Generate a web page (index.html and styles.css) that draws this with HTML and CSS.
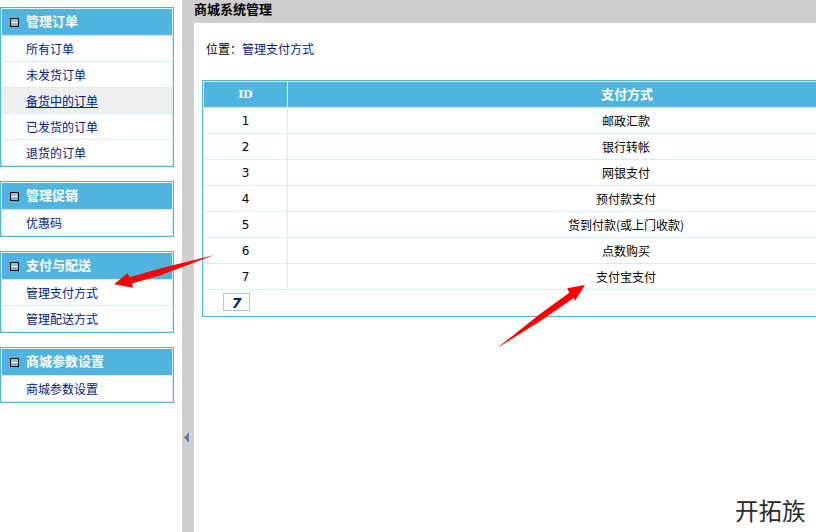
FILE: index.html
```html
<!DOCTYPE html>
<html lang="zh-CN">
<head>
<meta charset="utf-8">
<title>管理支付方式</title>
<link rel="stylesheet" href="styles.css">
</head>
<body>
<div class="layout">
  <aside class="sidebar">
    <section class="panel">
      <h2 class="panel-head"><span class="toggle"></span>管理订单</h2>
      <a class="item">所有订单</a>
      <a class="item">未发货订单</a>
      <a class="item active">备货中的订单</a>
      <a class="item">已发货的订单</a>
      <a class="item">退货的订单</a>
    </section>
    <section class="panel">
      <h2 class="panel-head"><span class="toggle"></span>管理促销</h2>
      <a class="item">优惠码</a>
    </section>
    <section class="panel">
      <h2 class="panel-head"><span class="toggle"></span>支付与配送</h2>
      <a class="item">管理支付方式</a>
      <a class="item">管理配送方式</a>
    </section>
    <section class="panel">
      <h2 class="panel-head"><span class="toggle"></span>商城参数设置</h2>
      <a class="item">商城参数设置</a>
    </section>
  </aside>
  <div class="splitter">
    <svg class="splitter-arrow" width="6" height="11" viewBox="0 0 6 11"><polygon points="0,5.5 3,2.5 3,8.5" fill="#8a6f5c"/><polygon points="3,2 5,0.5 5,10.5 3,9" fill="#4f7fb8"/></svg>
  </div>
  <main class="main">
    <header class="topbar">商城系统管理</header>
    <div class="content">
      <p class="crumb">位置：<a class="crumb-link">管理支付方式</a></p>
      <div class="grid">
        <table class="grid-table">
          <colgroup><col class="col-id"><col></colgroup>
          <thead>
            <tr><th>ID</th><th>支付方式</th></tr>
          </thead>
          <tbody>
            <tr><td class="num">1</td><td>邮政汇款</td></tr>
            <tr><td class="num">2</td><td>银行转帐</td></tr>
            <tr><td class="num">3</td><td>网银支付</td></tr>
            <tr><td class="num">4</td><td>预付款支付</td></tr>
            <tr><td class="num">5</td><td>货到付款(或上门收款)</td></tr>
            <tr><td class="num">6</td><td>点数购买</td></tr>
            <tr><td class="num">7</td><td>支付宝支付</td></tr>
            <tr><td class="pager-cell" colspan="2"><span class="pager">7</span></td></tr>
          </tbody>
        </table>
      </div>
    </div>
  </main>
</div>
<svg class="annotations" width="816" height="532" viewBox="0 0 816 532">
  <polygon points="214,255 160,268.5 130,277.3 127.3,273.3 114,284.3 133.3,287.7 131.7,283.5 160,275.5" fill="#ff0000"/>
  <polygon points="496.5,348.5 540,314 569.3,292.7 567.3,288.3 585,285 575,300.7 573.7,298 542,320" fill="#ff0000"/>
</svg>
<div class="watermark">开拓族</div>
</body>
</html>
```
FILE: styles.css
```css
* { box-sizing: border-box; }
html, body { margin: 0; padding: 0; height: 100%; overflow: hidden; background: #fff; }
body {
  position: relative;
  font-family: "Noto Sans CJK SC", "Liberation Sans", sans-serif;
  font-size: 12px;
  color: #000;
}
.layout { display: flex; height: 532px; width: 816px; }

.sidebar {
  flex: 0 0 182px;
  display: flex;
  flex-direction: column;
  gap: 14px;
  padding-top: 7px;
}
.panel {
  width: 174px;
  border: 1px solid #50b4de;
  display: flex;
  flex-direction: column;
}
.panel-head {
  margin: 0;
  height: 28px;
  border: 1px solid #cdf0fb;
  border-top-color: #e8f8fd;
  background: #50b4de;
  color: #fff;
  font-size: 13px;
  font-weight: 700;
  line-height: 22px;
  display: flex;
  align-items: center;
  padding: 0 0 2px 8px;
}
.toggle {
  width: 9px;
  height: 9px;
  margin: 2px 7px 0 0;
  flex: none;
  border: 1px solid #000;
  background: linear-gradient(#8fc3dc 0 3px, #e8eef2 3px 4px, #7fb8d6 4px);
}
.item {
  display: block;
  height: 26px;
  line-height: 25px;
  padding-left: 24px;
  color: #00217f;
  background: #fff;
  border-left: 1px solid #cdf0fb;
  border-right: 1px solid #cdf0fb;
  border-bottom: 1px solid #cdf0fb;
}
.item.active { background: #eeeeee; text-decoration: underline; }

.splitter {
  flex: 0 0 12px;
  background: #cfcfcf;
  padding: 432px 0 0 2px;
}
.splitter-arrow { display: block; }

.main { flex: 1 1 auto; min-width: 0; overflow: hidden; }
.topbar {
  height: 23px;
  background: #cfcfcf;
  font-size: 13px;
  font-weight: 700;
  line-height: 18px;
  color: #000;
  white-space: nowrap;
}
.content { padding: 13px 0 0 8px; width: 780px; }
.crumb {
  margin: 0 0 18px;
  height: 26px;
  line-height: 26px;
  padding-left: 4px;
}
.crumb-link { color: #00217f; }

.grid { width: 766px; border: 1px solid #50b4de; }
.grid-table {
  width: 100%;
  table-layout: fixed;
  border-collapse: separate;
  border-spacing: 0;
  border: 1px solid #cdf0fb;
  border-bottom: 0;
}
.col-id { width: 84px; }
.grid-table th {
  height: 26px;
  padding: 0 0 2px;
  background: #50b4de;
  color: #fff;
  font-size: 13px;
  font-weight: 700;
  text-align: center;
  border-bottom: 1px solid #cdf0fb;
  border-right: 1px solid #e8f8fd;
}
.grid-table th:first-child { font-family: "Liberation Serif", serif; }
.grid-table th:last-child { border-right: 0; }
.grid-table td {
  height: 26px;
  padding: 0 2px 0 0;
  text-align: center;
  border-bottom: 1px solid #cdf0fb;
  border-right: 1px solid #cdf0fb;
  line-height: 25px;
}
.grid-table td:last-child { border-right: 0; }
.grid-table td.num {
  font-family: "DejaVu Sans", sans-serif;
  font-size: 12px;
  line-height: 23px;
  padding: 2px 0 0;
}
.grid-table td.pager-cell {
  border: 0;
  text-align: left;
  vertical-align: top;
  padding: 3px 0 0 19px;
  height: 26px;
  line-height: 0;
}
.pager {
  display: inline-block;
  width: 27px;
  height: 18px;
  border: 1px solid #a9c9e2;
  text-align: center;
  font-family: "DejaVu Sans", sans-serif;
  font-size: 14px;
  font-weight: 700;
  font-style: italic;
  line-height: 19px;
  color: #00217f;
}

.annotations { position: absolute; left: 0; top: 0; pointer-events: none; }
.watermark {
  position: absolute;
  left: 735px;
  top: 493px;
  font-size: 23.5px;
  line-height: 34px;
  color: #2a2a2a;
  white-space: nowrap;
  font-weight: 400;
}
```
